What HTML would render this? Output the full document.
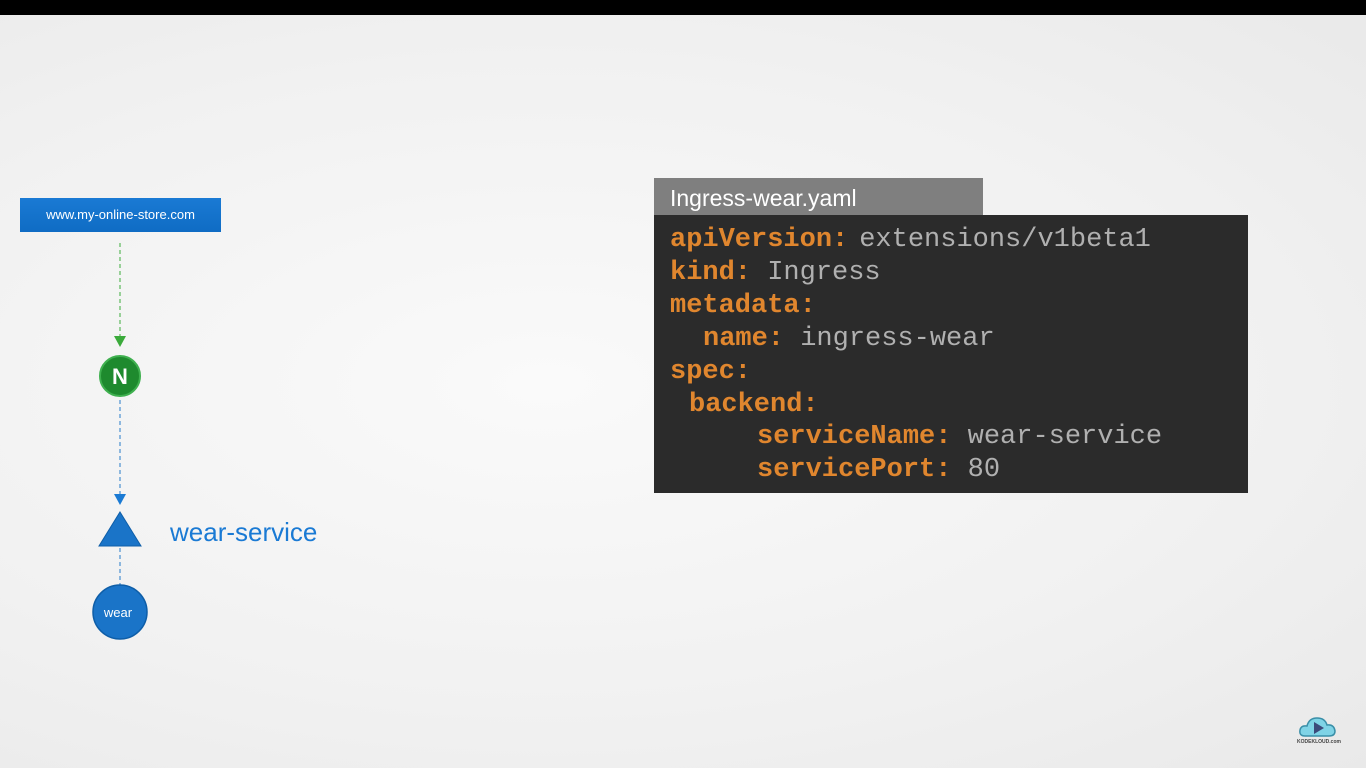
<!DOCTYPE html>
<html><head><style>
body{margin:0;width:1366px;height:768px;overflow:hidden;background:radial-gradient(ellipse at 40% 50%,#fafafa 0%,#f1f1f1 60%,#e9e9e9 100%);font-family:"Liberation Sans",sans-serif;position:relative}
.top{position:absolute;left:0;top:0;width:1366px;height:15px;background:#000}
.url{position:absolute;left:20px;top:198px;width:201px;height:34px;background:linear-gradient(#1a7ad4,#0f6cc4);color:#fff;font-size:13px;line-height:34px;text-align:center}
.code{position:absolute;left:654px;top:215px;width:594px;height:278px;background:#2b2b2b}
.tab{position:absolute;left:654px;top:178px;width:329px;height:37px;background:#7f7f7f;color:#fff;font-size:23px;line-height:40px;padding-left:16px;box-sizing:border-box}
.l{position:absolute;font-family:"Liberation Mono",monospace;font-size:27px;line-height:33px;white-space:pre;color:#b0b0b0}
.l b{color:#e0862e}
</style></head><body>
<div class="top"></div>
<div class="url">www.my-online-store.com</div>
<svg width="400" height="768" style="position:absolute;left:0;top:0">
<line x1="120" y1="243" x2="120" y2="336" stroke="#5cb85c" stroke-width="1.2" stroke-dasharray="4,3"/>
<polygon points="114,336 126,336 120,347" fill="#3aaa3a"/>
<circle cx="120" cy="376" r="20" fill="#1e8a2e" stroke="#3fb04f" stroke-width="2"/>
<text x="120" y="384" text-anchor="middle" fill="#fff" font-family="Liberation Sans" font-weight="bold" font-size="22">N</text>
<line x1="120" y1="400" x2="120" y2="494" stroke="#4a90d0" stroke-width="1.2" stroke-dasharray="4,3"/>
<polygon points="114,494 126,494 120,505" fill="#1a7ad4"/>
<polygon points="120,512 141,546 99,546" fill="#1a74c8" stroke="#0e5ea8" stroke-width="1"/>
<line x1="120" y1="548" x2="120" y2="586" stroke="#4a90d0" stroke-width="1.2" stroke-dasharray="4,3"/>
<circle cx="120" cy="612" r="27" fill="#1a74c8" stroke="#0e5ea8" stroke-width="1.5"/>
<text x="118" y="617" text-anchor="middle" fill="#fff" font-family="Liberation Sans" font-size="13">wear</text>
<text x="170" y="541" fill="#1a7ad4" font-family="Liberation Sans" font-size="26">wear-service</text>
</svg>
<div class="tab">Ingress-wear.yaml</div>
<div class="code"></div>
<div class="l" style="left:670px;top:224px"><b>apiVersion:</b><span style="margin-left:11px">extensions/v1beta1</span></div>
<div class="l" style="left:670px;top:257px"><b>kind:</b> Ingress</div>
<div class="l" style="left:670px;top:290px"><b>metadata:</b></div>
<div class="l" style="left:703px;top:323px"><b>name:</b> ingress-wear</div>
<div class="l" style="left:670px;top:356px"><b>spec:</b></div>
<div class="l" style="left:689px;top:389px"><b>backend:</b></div>
<div class="l" style="left:757px;top:421px"><b>serviceName:</b> wear-service</div>
<div class="l" style="left:757px;top:454px"><b>servicePort:</b> 80</div>
<svg width="50" height="40" style="position:absolute;left:1297px;top:712px">
<path d="M8 24 Q2 24 3 18 Q4 13 10 14 Q12 6 20 6 Q28 6 30 13 Q37 12 38 19 Q38 24 32 24 Z" fill="#7fd3e6" stroke="#3a8fa8" stroke-width="1.5"/>
<polygon points="17,10 17,22 27,16" fill="#3b4a7a"/>
<text x="22" y="31" text-anchor="middle" font-family="Liberation Sans" font-size="5" font-weight="bold" fill="#444">KODEKLOUD.com</text>
</svg>
</body></html>
